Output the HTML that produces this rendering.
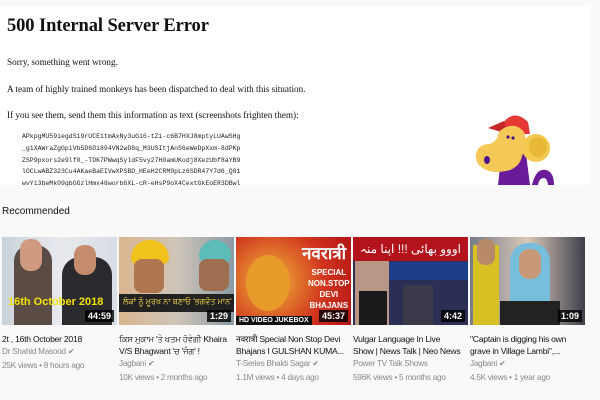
<!DOCTYPE html>
<html><head><meta charset="utf-8"><style>
*{margin:0;padding:0;box-sizing:border-box}
body{width:600px;height:400px;overflow:hidden;background:#f9f9f9;position:relative;font-family:"Liberation Sans",sans-serif}
.top{position:absolute;left:0;top:6px;width:590px;height:179px;background:#fff;font-family:"Liberation Serif",serif;color:#111}
h1{position:absolute;left:7px;top:10px;font-size:18.5px;font-weight:bold;letter-spacing:-0.1px}
.p{position:absolute;left:7px;font-size:9.2px;white-space:nowrap}
pre{position:absolute;left:22px;top:125px;font-family:"Liberation Mono",monospace;font-size:6.5px;line-height:11.8px;color:#222}
.rec{position:absolute;left:2px;top:206px;font-size:10px;color:#111}
.th{position:absolute;top:237px;width:115px;height:88px;overflow:hidden}
.d{position:absolute;right:3px;bottom:3px;background:rgba(0,0,0,.8);color:#fff;font-size:9px;font-weight:bold;padding:1px 3px}
.c{position:absolute;top:333px;width:115px;font-size:8.6px;line-height:12px;letter-spacing:-0.25px}
.t{color:#111}
.m{color:#888;font-size:8.2px;line-height:12.5px;margin-top:1px}
</style></head><body>
<div class="top">
<h1>500 Internal Server Error</h1>
<div class="p" style="top:51px">Sorry, something went wrong.</div>
<div class="p" style="top:78px">A team of highly trained monkeys has been dispatched to deal with this situation.</div>
<div class="p" style="top:104px">If you see them, send them this information as text (screenshots frighten them):</div>
<pre>APkpgMU59iegdS19rUCE1tmAxNy3uG16-tZi-c6B7HXJ8mptyLUAwSHg
_g1XAWraZgGpiVb5D6Di894VN2wD8q_M3USItjAnS6eWeDpXxm-8dPKp
ZSP9pxors2e9lf0_-TDK7PWwqSyldF5vy27H0amUKodj8XezUbf8aYB9
lOCLwABZ323Cu4AKaeBaEIVwXPSBD_HEeH2CRM9pLz6SDR47Y7d6_Q81
wvYi3beMk09qbGGzlHmx48worb6XL-cR-eHsP9oX4CextGkEoER3DBwl</pre>
<svg style="position:absolute;left:468px;top:98px" width="100" height="81" viewBox="0 0 100 81">
<path d="M30 81 L34 45 Q45 38 58 50 L62 81Z" fill="#6a1b9a"/>
<ellipse cx="68" cy="44" rx="14" ry="14" fill="#f3c94f"/>
<ellipse cx="70" cy="43" rx="9" ry="10" fill="#e9b838"/>
<path d="M34 20 Q46 4 60 18 L62 30 L32 30Z" fill="#e53935"/>
<path d="M20 24 L36 17 L40 30Z" fill="#c62828"/>
<path d="M36 24 Q48 18 56 28 Q60 40 54 52 Q52 62 42 66 Q28 70 18 66 Q6 60 8 50 Q10 40 22 40 Q30 36 30 30 Q32 26 36 24Z" fill="#f5c957"/>
<circle cx="40" cy="33" r="1.6" fill="#4a148c"/><circle cx="45" cy="34" r="1.6" fill="#4a148c"/>
<ellipse cx="19" cy="56" rx="3" ry="4" fill="#4a148c"/>
<path d="M64 81 Q68 64 78 66 Q86 68 86 81 L80 81 Q79 74 76 74 Q71 74 70 81Z" fill="#6a1b9a"/>
</svg>
</div>
<div class="rec">Recommended</div>

<div class="th" style="left:2px;background:linear-gradient(90deg,#c9d2d8,#e7e9ee 50%,#d8dde3)">
<div style="position:absolute;left:12px;top:8px;width:38px;height:80px;background:#5a4b44;border-radius:16px 16px 0 0"></div>
<div style="position:absolute;left:18px;top:2px;width:22px;height:32px;background:#d09a80;border-radius:10px"></div>
<div style="position:absolute;left:60px;top:20px;width:50px;height:70px;background:#2b2b2f;border-radius:18px 18px 0 0"></div>
<div style="position:absolute;left:72px;top:8px;width:22px;height:30px;background:#c58b6d;border-radius:10px"></div>
<div style="position:absolute;left:6px;top:59px;color:#f3e200;font-weight:bold;font-size:11px;white-space:nowrap">16th October 2018</div>
<div class="d">44:59</div></div>

<div class="th" style="left:119px;background:linear-gradient(90deg,#d9b590,#cfc5b8 50%,#8a9aa5)">
<div style="position:absolute;left:12px;top:3px;width:38px;height:24px;background:#f1c21b;border-radius:18px 18px 6px 6px"></div>
<div style="position:absolute;left:15px;top:22px;width:30px;height:34px;background:#b07650;border-radius:8px"></div>
<div style="position:absolute;left:80px;top:3px;width:32px;height:22px;background:#5cbcb8;border-radius:16px 16px 6px 6px"></div>
<div style="position:absolute;left:80px;top:22px;width:30px;height:32px;background:#9f6e50;border-radius:8px"></div>
<div style="position:absolute;left:0;top:57px;width:115px;height:18px;background:#222"></div>
<div style="position:absolute;left:4px;top:60px;color:#ffe14a;font-size:8px;white-space:nowrap">ਲੋਕਾਂ ਨੂੰ ਮੂਰਖ ਨਾ ਬਣਾਓ 'ਭਗਵੰਤ ਮਾਨ'</div>
<div class="d">1:29</div></div>

<div class="th" style="left:236px;background:radial-gradient(circle at 30% 50%,#f2b63a,#d0341e 60%,#b31515)">
<div style="position:absolute;left:10px;top:18px;width:44px;height:56px;background:#e89a2a;border-radius:50%"></div>
<div style="position:absolute;left:66px;top:4px;color:#fff;font-weight:bold;font-size:17px">नवरात्री</div>
<div style="position:absolute;left:72px;top:30px;color:#fff;font-weight:bold;font-size:8px;line-height:11px;text-align:center">SPECIAL<br>NON.STOP<br>DEVI<br>BHAJANS</div>
<div style="position:absolute;left:0;bottom:0;background:#111;color:#fff;font-size:7px;font-weight:bold;padding:1px 3px">HD VIDEO JUKEBOX</div>
<div class="d">45:37</div></div>

<div class="th" style="left:353px;background:#2b2f55">
<div style="position:absolute;left:0;top:0;width:115px;height:24px;background:#b3141b;color:#fff;font-size:12px;text-align:center;line-height:24px">اووو بھائی !!! اپنا منہ بند کر</div>
<div style="position:absolute;left:36px;top:25px;width:79px;height:18px;background:#1d3f8a"></div>
<div style="position:absolute;left:2px;top:24px;width:34px;height:64px;background:#b99685"></div>
<div style="position:absolute;left:6px;top:54px;width:28px;height:34px;background:#1a1a1a"></div>
<div style="position:absolute;left:50px;top:48px;width:30px;height:40px;background:#3a3a4a"></div>
<div class="d">4:42</div></div>

<div class="th" style="left:470px;background:linear-gradient(90deg,#777b88,#d9c8b8 50%,#3d3f4c)">
<div style="position:absolute;left:3px;top:8px;width:26px;height:80px;background:#d7c024"></div>
<div style="position:absolute;left:7px;top:2px;width:18px;height:26px;background:#b88a6a;border-radius:8px"></div>
<div style="position:absolute;left:40px;top:6px;width:40px;height:82px;background:#76bedc;border-radius:18px 18px 0 0"></div>
<div style="position:absolute;left:49px;top:12px;width:22px;height:30px;background:#c99878;border-radius:10px"></div>
<div style="position:absolute;left:30px;top:64px;width:60px;height:24px;background:#222"></div>
<div class="d">1:09</div></div>

<div class="c" style="left:2px"><div class="t">2t , 16th October 2018</div><div class="m">Dr Shahid Masood ✔</div><div class="m">25K views • 8 hours ago</div></div>
<div class="c" style="left:119px"><div class="t">ਕਿਸ ਮੁਕਾਮ 'ਤੇ ਖਤਮ ਹੋਵੇਗੀ Khaira<br>V/S Bhagwant 'ਚ 'ਜੰਗ' !</div><div class="m">Jagbani ✔</div><div class="m">10K views • 2 months ago</div></div>
<div class="c" style="left:236px"><div class="t">नवरात्री Special Non Stop Devi<br>Bhajans I GULSHAN KUMA...</div><div class="m">T-Series Bhakti Sagar ✔</div><div class="m">1.1M views • 4 days ago</div></div>
<div class="c" style="left:353px"><div class="t">Vulgar Language In Live<br>Show | News Talk | Neo News</div><div class="m">Power TV Talk Shows</div><div class="m">596K views • 5 months ago</div></div>
<div class="c" style="left:470px"><div class="t">"Captain is digging his own<br>grave in Village Lambi",...</div><div class="m">Jagbani ✔</div><div class="m">4.5K views • 1 year ago</div></div>
</body></html>
